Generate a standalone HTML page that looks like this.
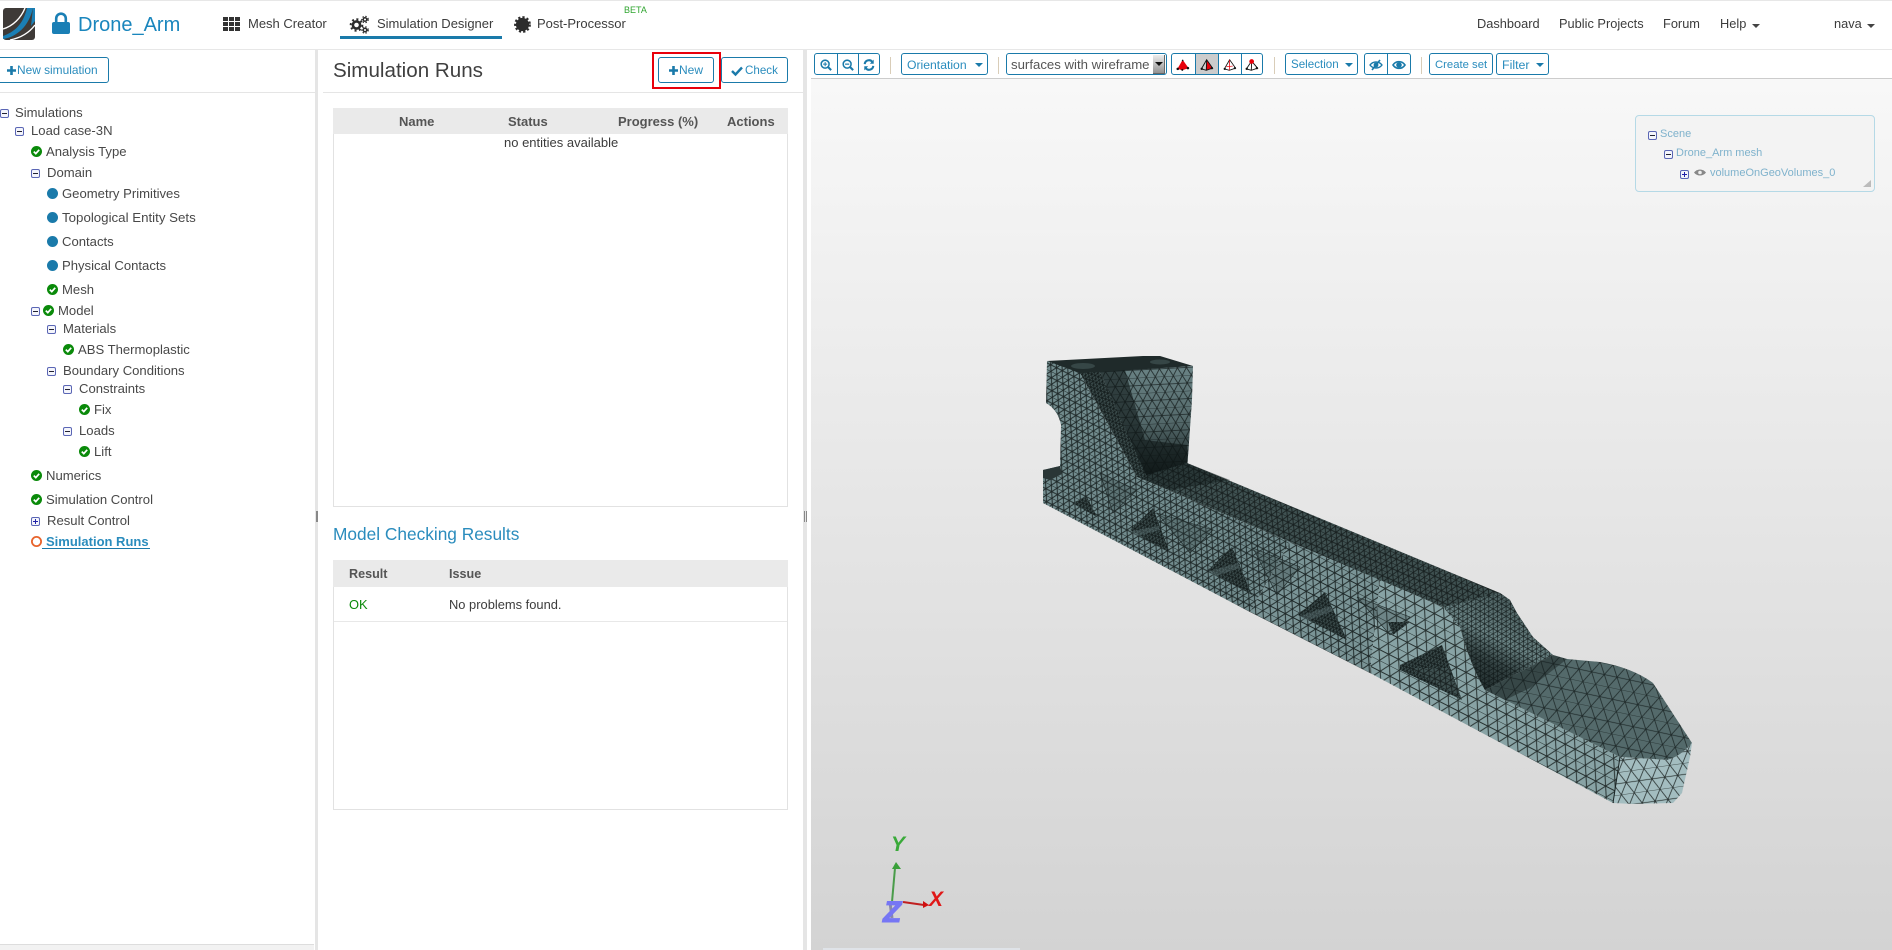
<!DOCTYPE html>
<html lang="en"><head><meta charset="utf-8"><title>Drone_Arm</title>
<style>
html,body{margin:0;padding:0;background:#fff}
body{width:1892px;height:950px;overflow:hidden;position:relative;font-family:"Liberation Sans",sans-serif;color:#444}
.a{position:absolute;white-space:nowrap}
.t{position:absolute;white-space:nowrap;font-size:13.1px;line-height:16px;color:#484848}
.i{position:absolute;overflow:visible}
.n{position:absolute;white-space:nowrap;font-size:12.8px;line-height:16px;color:#3c3c3c;top:16px}
.b{position:absolute;box-sizing:border-box;border:1px solid #1a7aaa;border-radius:3px;background:#fff;color:#2a8cbd;font-size:12px;line-height:22px;white-space:nowrap;text-align:left}
.th{position:absolute;font-weight:bold;font-size:13px;line-height:16px;color:#555;white-space:nowrap}
.sep{position:absolute;top:57px;width:1px;height:17px;background:#d9cdb8}
.dv{position:absolute;top:53px;width:1px;height:22px;background:#1a7aaa}
.tr{position:absolute;white-space:nowrap;font-size:11px;line-height:14px;color:#7fb2cc}
</style></head><body>
<svg width="0" height="0" style="position:absolute"><defs>
<symbol id="chk" viewBox="0 0 11 11"><circle cx="5.5" cy="5.5" r="5.5" fill="#0a8a0a"/><path d="M2.8 5.6L4.8 7.6L8.2 3.8" fill="none" stroke="#fff" stroke-width="1.7"/></symbol>
<symbol id="min" viewBox="0 0 9 9"><rect x=".5" y=".5" width="8" height="8" rx="1.5" fill="#f4f5fb" stroke="#5a66b5"/><path d="M2 4.5H7" stroke="#223" stroke-width="1"/></symbol>
<symbol id="pls" viewBox="0 0 9 9"><rect x=".5" y=".5" width="8" height="8" rx="1.5" fill="#f4f5fb" stroke="#5a66b5"/><path d="M2 4.5H7M4.5 2V7" stroke="#22a" stroke-width="1"/></symbol>
<pattern id="mS1" width="6.5" height="11.26" patternUnits="userSpaceOnUse" patternTransform="rotate(27)"><rect width="6.5" height="11.26" fill="#728c8e"/><path d="M0 0H6.5M0 5.63H6.5M0 0L3.25 5.63L0 11.26M6.5 0L3.25 5.63L6.5 11.26" stroke="#1e2828" stroke-width=".95" fill="none"/></pattern>
<pattern id="mSm" width="8.5" height="14.7" patternUnits="userSpaceOnUse" patternTransform="rotate(27)"><rect width="8.5" height="14.7" fill="#7a9496"/><path d="M0 0H8.5M0 7.35H8.5M0 0L4.25 7.35L0 14.7M8.5 0L4.25 7.35L8.5 14.7" stroke="#1e2828" stroke-width=".95" fill="none"/></pattern>
<pattern id="mS2" width="11" height="19" patternUnits="userSpaceOnUse" patternTransform="rotate(27)"><rect width="11" height="19" fill="#88a3a5"/><path d="M0 0H11M0 9.5H11M0 0L5.5 9.5L0 19M11 0L5.5 9.5L11 19" stroke="#26302f" stroke-width=".95" fill="none"/></pattern>
<pattern id="mE" width="13" height="22.5" patternUnits="userSpaceOnUse" patternTransform="rotate(-8)"><rect width="13" height="22.5" fill="#a3bdc0"/><path d="M0 0H13M0 11.25H13M0 0L6.5 11.25L0 22.5M13 0L6.5 11.25L13 22.5" stroke="#27302f" stroke-width=".8" fill="none"/></pattern>
<pattern id="mT" width="6" height="10.4" patternUnits="userSpaceOnUse" patternTransform="rotate(24)"><rect width="6" height="10.4" fill="#3f5151"/><path d="M0 0H6M0 5.2H6M0 0L3 5.2L0 10.4M6 0L3 5.2L6 10.4" stroke="#182020" stroke-width=".9" fill="none"/></pattern>
<pattern id="mP" width="13" height="22.5" patternUnits="userSpaceOnUse" patternTransform="rotate(12)"><rect width="13" height="22.5" fill="#546a6b"/><path d="M0 0H13M0 11.25H13M0 0L6.5 11.25L0 22.5M13 0L6.5 11.25L13 22.5" stroke="#1f2a2a" stroke-width=".8" fill="none"/></pattern>
<pattern id="mD" width="3.6" height="6.2" patternUnits="userSpaceOnUse" patternTransform="rotate(20)"><rect width="3.6" height="6.2" fill="#3c4d4d"/><path d="M0 0H3.6M0 3.1H3.6M0 0L1.8 3.1L0 6.2M3.6 0L1.8 3.1L3.6 6.2" stroke="#121a1a" stroke-width=".7" fill="none"/></pattern>
<pattern id="mF" width="5" height="8.6" patternUnits="userSpaceOnUse" patternTransform="rotate(30)"><rect width="5" height="8.6" fill="#708a8b"/><path d="M0 0H5M0 4.3H5M0 0L2.5 4.3L0 8.6M5 0L2.5 4.3L5 8.6" stroke="#1a2323" stroke-width=".7" fill="none"/></pattern>
<pattern id="mB" width="9" height="15.6" patternUnits="userSpaceOnUse" patternTransform="rotate(-3)"><rect width="9" height="15.6" fill="#6a8385"/><path d="M0 0H9M0 7.8H9M0 0L4.5 7.8L0 15.6M9 0L4.5 7.8L9 15.6" stroke="#1f2929" stroke-width=".8" fill="none"/></pattern>
<linearGradient id="cg" x1="0" y1="0" x2="0" y2="1"><stop offset="0" stop-color="#111a1a" stop-opacity="0"/><stop offset=".5" stop-color="#111a1a" stop-opacity=".25"/><stop offset="1" stop-color="#0a1010" stop-opacity=".95"/></linearGradient>
<linearGradient id="fg" gradientUnits="userSpaceOnUse" x1="1510" y1="600" x2="1470" y2="680"><stop offset="0" stop-color="#0c1414" stop-opacity=".35"/><stop offset=".45" stop-color="#0c1414" stop-opacity=".05"/><stop offset=".72" stop-color="#0c1414" stop-opacity=".6"/><stop offset="1" stop-color="#0c1414" stop-opacity=".75"/></linearGradient>
</defs></svg>

<!-- top nav -->
<div class="a" style="left:0;top:0;width:1892px;height:1px;background:#e7e7e7"></div>
<div class="a" style="left:0;top:49px;width:1892px;height:1px;background:#e7e7e7"></div>
<svg class="i" style="left:3px;top:8px" width="32" height="32" viewBox="0 0 32 32"><rect width="32" height="32" rx="3" fill="#3e3a37"/><path d="M0 28C11 24 20 17 24 0H30C26 18 14 29 0 31Z" fill="#1a7fb5"/><path d="M0 21C10 18 18 10 22 0" fill="none" stroke="#fff" stroke-width="1.4"/><path d="M7 32C17 30 26 25 32 17" fill="none" stroke="#fff" stroke-width="1.4"/><path d="M30 0H32V13L28 18Z" fill="#1a7fb5"/></svg>
<svg class="i" style="left:52px;top:12px" width="18" height="22" viewBox="0 0 18 22"><path d="M4.2 11V6.5a4.8 4.8 0 0 1 9.6 0V11" fill="none" stroke="#1a7fb5" stroke-width="2.6"/><rect y="10" width="18" height="12" rx="2" fill="#1a7fb5"/></svg>
<div class="a" style="left:78px;top:13px;font-size:20px;line-height:24px;color:#1a86bd">Drone_Arm</div>
<svg class="i" style="left:223px;top:17px" width="17" height="14" fill="#333"><rect width="5" height="4"/><rect x="6" width="5" height="4"/><rect x="12" width="5" height="4"/><rect y="5" width="5" height="4"/><rect x="6" y="5" width="5" height="4"/><rect x="12" y="5" width="5" height="4"/><rect y="10" width="5" height="4"/><rect x="6" y="10" width="5" height="4"/><rect x="12" y="10" width="5" height="4"/></svg>
<div class="n" style="left:248px;font-size:13px">Mesh Creator</div>
<svg class="i" style="left:350px;top:15px" width="19" height="19" fill="none" stroke="#2c2c2c"><circle cx="6.5" cy="10" r="3.6" stroke-width="2.6"/><circle cx="6.5" cy="10" r="5.8" stroke-width="2" stroke-dasharray="2 2.5"/><circle cx="15" cy="4.5" r="1.8" stroke-width="1.5"/><circle cx="15" cy="4.5" r="3.2" stroke-width="1.2" stroke-dasharray="1.4 1.6"/><circle cx="15" cy="15" r="1.8" stroke-width="1.5"/><circle cx="15" cy="15" r="3.2" stroke-width="1.2" stroke-dasharray="1.4 1.6"/></svg>
<div class="n" style="left:377px;font-size:13px">Simulation Designer</div>
<div class="a" style="left:340px;top:36px;width:162px;height:3px;background:#1a7aaa"></div>
<svg class="i" style="left:514px;top:16px" width="17" height="17"><circle cx="8.5" cy="8.5" r="6.6" fill="#2c2c2c"/><circle cx="8.5" cy="8.5" r="7.2" fill="none" stroke="#2c2c2c" stroke-width="2.4" stroke-dasharray="2.2 2"/></svg>
<div class="n" style="left:537px;font-size:13px">Post-Processor</div>
<div class="a" style="left:624px;top:5px;font-size:9px;line-height:11px;color:#2fa52f">BETA</div>
<div class="n" style="left:1477px">Dashboard</div>
<div class="n" style="left:1559px">Public Projects</div>
<div class="n" style="left:1663px">Forum</div>
<div class="n" style="left:1720px">Help</div>
<svg class="i" style="left:1752px;top:24px" width="8" height="4"><path d="M0 0H8L4 4Z" fill="#444"/></svg>
<div class="n" style="left:1834px">nava</div>
<svg class="i" style="left:1867px;top:24px" width="8" height="4"><path d="M0 0H8L4 4Z" fill="#444"/></svg>

<!-- left panel -->
<div class="b" style="left:-4px;top:57px;width:113px;height:26px;line-height:24px;font-size:11.9px"><svg class="i" style="left:10px;top:8px" width="9" height="9"><path d="M4.5 0V9M0 4.5H9" stroke="#1a7aaa" stroke-width="2.6"/></svg><span style="position:absolute;left:20px">New simulation</span></div>
<div class="a" style="left:0;top:92px;width:315px;height:1px;background:#e5e5e5"></div>
<div class="a" style="left:0;top:944px;width:314px;height:6px;background:#f2f2f2;border-top:1px solid #ddd;box-sizing:border-box"></div>
<div class="a" style="left:315px;top:50px;width:3px;height:900px;background:#e5e5e5"></div>
<div class="a" style="left:316px;top:511px;width:2px;height:11px;border-left:1px solid #888;border-right:1px solid #888;box-sizing:border-box"></div>

<svg class="i" style="left:0;top:109px" width="9" height="9"><use href="#min"/></svg><div class="t" style="left:15px;top:105px">Simulations</div>
<svg class="i" style="left:15px;top:127px" width="9" height="9"><use href="#min"/></svg><div class="t" style="left:31px;top:123px">Load case-3N</div>
<svg class="i" style="left:31px;top:146px" width="11" height="11"><use href="#chk"/></svg><div class="t" style="left:46px;top:144px">Analysis Type</div>
<svg class="i" style="left:31px;top:169px" width="9" height="9"><use href="#min"/></svg><div class="t" style="left:47px;top:165px">Domain</div>
<svg class="i" style="left:47px;top:188px" width="11" height="11"><circle cx="5.5" cy="5.5" r="5.5" fill="#1a7aaa"/></svg><div class="t" style="left:62px;top:186px">Geometry Primitives</div>
<svg class="i" style="left:47px;top:212px" width="11" height="11"><circle cx="5.5" cy="5.5" r="5.5" fill="#1a7aaa"/></svg><div class="t" style="left:62px;top:210px;font-size:13.3px">Topological Entity Sets</div>
<svg class="i" style="left:47px;top:236px" width="11" height="11"><circle cx="5.5" cy="5.5" r="5.5" fill="#1a7aaa"/></svg><div class="t" style="left:62px;top:234px">Contacts</div>
<svg class="i" style="left:47px;top:260px" width="11" height="11"><circle cx="5.5" cy="5.5" r="5.5" fill="#1a7aaa"/></svg><div class="t" style="left:62px;top:258px">Physical Contacts</div>
<svg class="i" style="left:47px;top:284px" width="11" height="11"><use href="#chk"/></svg><div class="t" style="left:62px;top:282px">Mesh</div>
<svg class="i" style="left:31px;top:307px" width="9" height="9"><use href="#min"/></svg><svg class="i" style="left:43px;top:305px" width="11" height="11"><use href="#chk"/></svg><div class="t" style="left:58px;top:303px">Model</div>
<svg class="i" style="left:47px;top:325px" width="9" height="9"><use href="#min"/></svg><div class="t" style="left:63px;top:321px">Materials</div>
<svg class="i" style="left:63px;top:344px" width="11" height="11"><use href="#chk"/></svg><div class="t" style="left:78px;top:342px">ABS Thermoplastic</div>
<svg class="i" style="left:47px;top:367px" width="9" height="9"><use href="#min"/></svg><div class="t" style="left:63px;top:363px">Boundary Conditions</div>
<svg class="i" style="left:63px;top:385px" width="9" height="9"><use href="#min"/></svg><div class="t" style="left:79px;top:381px">Constraints</div>
<svg class="i" style="left:79px;top:404px" width="11" height="11"><use href="#chk"/></svg><div class="t" style="left:94px;top:402px">Fix</div>
<svg class="i" style="left:63px;top:427px" width="9" height="9"><use href="#min"/></svg><div class="t" style="left:79px;top:423px">Loads</div>
<svg class="i" style="left:79px;top:446px" width="11" height="11"><use href="#chk"/></svg><div class="t" style="left:94px;top:444px">Lift</div>
<svg class="i" style="left:31px;top:470px" width="11" height="11"><use href="#chk"/></svg><div class="t" style="left:46px;top:468px">Numerics</div>
<svg class="i" style="left:31px;top:494px" width="11" height="11"><use href="#chk"/></svg><div class="t" style="left:46px;top:492px">Simulation Control</div>
<svg class="i" style="left:31px;top:517px" width="9" height="9"><use href="#pls"/></svg><div class="t" style="left:47px;top:513px">Result Control</div>
<svg class="i" style="left:31px;top:536px" width="11" height="11"><circle cx="5.5" cy="5.5" r="4.6" fill="none" stroke="#e8642c" stroke-width="1.8"/></svg>
<div class="t" style="left:46px;top:534px;font-weight:bold;font-size:13px;color:#2a8cbd">Simulation Runs</div>
<div class="a" style="left:42px;top:548px;width:108px;height:1px;background:#1a7aaa"></div>

<!-- middle panel -->
<div class="a" style="left:323px;top:92px;width:480px;height:1px;background:#e5e5e5"></div>
<div class="a" style="left:333px;top:58px;font-size:20.6px;line-height:26px;color:#3f3f3f">Simulation Runs</div>
<div class="b" style="left:658px;top:57px;width:56px;height:26px;line-height:25px;font-size:12px"><svg class="i" style="left:10px;top:8px" width="9" height="9"><path d="M4.5 0V9M0 4.5H9" stroke="#1a7aaa" stroke-width="2.6"/></svg><span style="position:absolute;left:20px">New</span></div>
<div class="b" style="left:721px;top:57px;width:67px;height:26px;line-height:25px;font-size:11.6px"><svg class="i" style="left:9px;top:8px" width="12" height="10"><path d="M1 5L4.5 8.5L11 1.5" fill="none" stroke="#1a7aaa" stroke-width="2.4"/></svg><span style="position:absolute;left:23px">Check</span></div>
<div class="a" style="left:652px;top:52px;width:69px;height:37px;box-sizing:border-box;border:2px solid #e8000b"></div>

<div class="a" style="left:333px;top:108px;width:455px;height:399px;box-sizing:border-box;border:1px solid #e2e2e2"></div>
<div class="a" style="left:333px;top:108px;width:455px;height:26px;background:#eaeaea"></div>
<div class="th" style="left:399px;top:114px">Name</div>
<div class="th" style="left:508px;top:114px">Status</div>
<div class="th" style="left:618px;top:114px">Progress (%)</div>
<div class="th" style="left:727px;top:114px">Actions</div>
<div class="a" style="left:504px;top:135px;font-size:13px;line-height:16px;color:#3c3c3c">no entities available</div>

<div class="a" style="left:333px;top:523px;font-size:17.3px;line-height:22px;color:#2a8cbd">Model Checking Results</div>
<div class="a" style="left:333px;top:560px;width:455px;height:250px;box-sizing:border-box;border:1px solid #e2e2e2"></div>
<div class="a" style="left:333px;top:560px;width:455px;height:27px;background:#eaeaea"></div>
<div class="th" style="left:349px;top:566px;font-size:12.6px">Result</div>
<div class="th" style="left:449px;top:566px;font-size:12.6px">Issue</div>
<div class="a" style="left:349px;top:597px;font-size:12.9px;line-height:16px;color:#0a8a0a">OK</div>
<div class="a" style="left:449px;top:597px;font-size:12.9px;line-height:16px;color:#3c3c3c">No problems found.</div>
<div class="a" style="left:334px;top:621px;width:453px;height:1px;background:#e8e8e8"></div>
<div class="a" style="left:803px;top:50px;width:4px;height:900px;background:#e5e5e5"></div>
<div class="a" style="left:804px;top:511px;width:3px;height:11px;border-left:1px solid #888;border-right:1px solid #888;box-sizing:border-box"></div>

<!-- toolbar -->
<div class="b" style="left:814px;top:53px;width:66px;height:22px"></div>
<div class="dv" style="left:837px"></div><div class="dv" style="left:858px"></div>
<svg class="i" style="left:820px;top:59px" width="12" height="12" viewBox="0 0 14 14" fill="none" stroke="#1a7aaa"><circle cx="6" cy="6" r="4.6" stroke-width="1.8"/><path d="M9.5 9.5L13 13" stroke-width="2.4"/><path d="M3.6 6H8.4M6 3.6V8.4" stroke-width="1.2"/></svg>
<svg class="i" style="left:842px;top:59px" width="12" height="12" viewBox="0 0 14 14" fill="none" stroke="#1a7aaa"><circle cx="6" cy="6" r="4.6" stroke-width="1.8"/><path d="M9.5 9.5L13 13" stroke-width="2.4"/><path d="M3.6 6H8.4" stroke-width="1.4"/></svg>
<svg class="i" style="left:863px;top:59px" width="12" height="12" viewBox="0 0 14 14" fill="none" stroke="#1a7aaa" stroke-width="2.4"><path d="M2 6A5 5 0 0 1 11 3.5"/><path d="M12 8A5 5 0 0 1 3 10.5"/><path d="M12.5 0.8V5.5H8" fill="#1a7aaa" stroke="none"/><path d="M1.5 13.2V8.5H6" fill="#1a7aaa" stroke="none"/></svg>
<div class="sep" style="left:890px"></div>
<div class="b" style="left:901px;top:53px;width:87px;height:22px"><span style="position:absolute;left:5px;font-size:12.2px">Orientation</span><svg class="i" style="left:73px;top:9px" width="8" height="4"><path d="M0 0H8L4 4Z" fill="#1a7aaa"/></svg></div>
<div class="sep" style="left:998px"></div>
<div class="b" style="left:1006px;top:53px;width:161px;height:22px;color:#555;font-size:13.2px;line-height:21px;padding-left:4px">surfaces with wireframe</div>
<div class="a" style="left:1153px;top:55px;width:12px;height:19px;background:linear-gradient(#ededed,#8e8e8e);box-shadow:inset -1px -1px 0 #666"></div>
<svg class="i" style="left:1155px;top:62px" width="8" height="4"><path d="M0 0H8L4 4Z" fill="#111"/></svg>
<div class="b" style="left:1171px;top:53px;width:92px;height:22px"></div>
<div class="a" style="left:1195px;top:54px;width:23px;height:20px;background:#ccc"></div>
<div class="dv" style="left:1195px"></div><div class="dv" style="left:1218px"></div><div class="dv" style="left:1241px"></div>
<svg class="i" style="left:1176px;top:59px" width="14" height="12" viewBox="0 0 20 17"><path d="M9.5 1L2 14L9 16L18 13Z" fill="#e8000b"/><g fill="#111"><circle cx="9.5" cy="2" r="1.2"/><circle cx="2.5" cy="14" r="1.8"/><circle cx="17" cy="13" r="1.8"/><circle cx="9" cy="15.5" r="1.4"/></g></svg>
<svg class="i" style="left:1200px;top:59px" width="14" height="12" viewBox="0 0 20 17"><path d="M9.5 1L9 16L17 13Z" fill="#e8000b"/><path d="M9.5 1L2 14L9 16L18 13ZM9.5 1L9 16" fill="none" stroke="#111" stroke-width="1.3"/><g fill="#111"><circle cx="2.5" cy="14" r="1.7"/><circle cx="17" cy="13" r="1.7"/></g></svg>
<svg class="i" style="left:1223px;top:59px" width="14" height="12" viewBox="0 0 20 17"><path d="M9.5 1L2 14L9 16L18 13Z" fill="#fff" stroke="#111" stroke-width="1.2"/><path d="M9.5 1L9 16" stroke="#e8000b" stroke-width="1.1"/><path d="M5 11L14 10" stroke="#e8000b" stroke-width=".9"/><g fill="#111"><circle cx="2.5" cy="14" r="1.6"/><circle cx="17" cy="13" r="1.6"/></g></svg>
<svg class="i" style="left:1245px;top:59px" width="14" height="12" viewBox="0 0 20 17"><path d="M9.5 3L2 14L9 16L18 13ZM9.5 3L9 16" fill="none" stroke="#111" stroke-width="1.3"/><circle cx="9.5" cy="3.5" r="3.4" fill="#e8000b"/><g fill="#111"><circle cx="2.5" cy="14" r="1.7"/><circle cx="17" cy="13" r="1.7"/></g></svg>
<div class="sep" style="left:1274px"></div>
<div class="b" style="left:1285px;top:53px;width:73px;height:22px"><span style="position:absolute;left:5px;font-size:11.6px">Selection</span><svg class="i" style="left:59px;top:9px" width="8" height="4"><path d="M0 0H8L4 4Z" fill="#1a7aaa"/></svg></div>
<div class="b" style="left:1364px;top:53px;width:47px;height:22px"></div>
<div class="dv" style="left:1387px"></div>
<svg class="i" style="left:1369px;top:59px" width="14" height="12"><path d="M1 6C4 2 10 2 13 6C10 10 4 10 1 6Z" fill="none" stroke="#1a7aaa" stroke-width="1.4"/><circle cx="7" cy="6" r="2.4" fill="#1a7aaa"/><path d="M3 11L11 1" stroke="#1a7aaa" stroke-width="1.6"/></svg>
<svg class="i" style="left:1392px;top:59px" width="14" height="12"><path d="M1 6C4 1.5 10 1.5 13 6C10 10.5 4 10.5 1 6Z" fill="none" stroke="#1a7aaa" stroke-width="1.6"/><circle cx="7" cy="6" r="2.8" fill="#1a7aaa"/></svg>
<div class="sep" style="left:1421px"></div>
<div class="b" style="left:1429px;top:53px;width:64px;height:22px"><span style="position:absolute;left:5px;font-size:11.3px">Create set</span></div>
<div class="b" style="left:1496px;top:53px;width:53px;height:22px"><span style="position:absolute;left:5px;font-size:12.4px">Filter</span><svg class="i" style="left:39px;top:9px" width="8" height="4"><path d="M0 0H8L4 4Z" fill="#1a7aaa"/></svg></div>

<!-- canvas -->
<div class="a" style="left:811px;top:78px;width:1081px;height:1px;background:#ccc"></div>
<div class="a" style="left:811px;top:79px;width:1081px;height:871px;background:linear-gradient(#f8f8f8,#d3d3d3)"></div>
<div class="a" style="left:823px;top:948px;width:197px;height:2px;background:#dfe3e8"></div>

<div class="a" style="left:1635px;top:115px;width:240px;height:77px;box-sizing:border-box;border:1px solid #b5d9e6;border-radius:4px;background:#f3f3f3"></div>
<svg class="i" style="left:1648px;top:131px" width="9" height="9"><use href="#min"/></svg><div class="tr" style="left:1660px;top:127px">Scene</div>
<svg class="i" style="left:1664px;top:150px" width="9" height="9"><use href="#min"/></svg><div class="tr" style="left:1676px;top:146px">Drone_Arm mesh</div>
<svg class="i" style="left:1680px;top:170px" width="9" height="9"><use href="#pls"/></svg>
<svg class="i" style="left:1694px;top:168px" width="12" height="9"><path d="M0 4.5C3 .5 9 .5 12 4.5C9 8.5 3 8.5 0 4.5Z" fill="#888"/><circle cx="6" cy="4.5" r="1.8" fill="#eee"/></svg>
<div class="tr" style="left:1710px;top:166px">volumeOnGeoVolumes_0</div>
<svg class="i" style="left:1863px;top:180px" width="8" height="7"><path d="M8 0V7H0Z" fill="#bbb"/></svg>

<!-- 3D mesh -->
<svg class="i" style="left:0;top:0" width="1892" height="950" viewBox="0 0 1892 950">
<!-- block top -->
<path d="M1047 361L1143 356L1160 356L1193 366L1100 373L1080 374Z" fill="#1f2a2a"/>
<ellipse cx="1083" cy="366" rx="12" ry="3" fill="#364646"/><ellipse cx="1160" cy="362" rx="10" ry="2.5" fill="#364646"/>
<!-- back face of block -->
<path d="M1100 372L1193 366L1192 400L1187 470L1147 478Z" fill="url(#mB)"/>
<path d="M1100 372L1193 366L1192 400L1187 470L1147 478Z" fill="url(#cg)"/>
<path d="M1100 372L1125 370L1145 440L1187 445L1187 463L1147 478Z" fill="#0f1717" opacity=".6"/>
<!-- beam top -->
<path d="M1137 477L1147 475L1187 463L1500 593L1510 600L1443 607Z" fill="url(#mT)"/>
<path d="M1137 477L1147 475L1187 463L1230 480L1170 490Z" fill="#101818" opacity=".45"/>
<!-- side wall -->
<path d="M1047 361L1080 373L1137 477L1290 542L1250 612L1043 503L1043 470L1060 466L1061 425Q1058 410 1046 403Z" fill="url(#mS1)"/>
<path d="M1290 542L1380 580L1370 673L1250 612Z" fill="url(#mSm)"/>
<path d="M1380 580L1443 607L1460 627Q1470 665 1485 690L1620 757L1613 803L1370 673Z" fill="url(#mS2)"/>
<!-- brace band -->
<path d="M1080 373L1100 372L1147 477L1137 477Z" fill="url(#mD)"/>
<!-- notch shadow -->
<path d="M1043 470L1060 466L1062 474L1050 480L1043 478Z" fill="#2a3636"/>
<!-- faint triangles -->
<g fill="#2a3838" fill-opacity=".28" stroke="#1d2727" stroke-width=".6">
<path d="M1137 490L1100 473L1113 513Z"/>
<path d="M1157 513L1213 530L1190 553Z"/>
<path d="M1253 548L1300 567L1277 595Z"/>
<path d="M1357 597L1410 617L1390 635Z"/>
</g>
<!-- dark holes -->
<g fill="url(#mD)">
<path d="M1072 503L1087 497L1097 517Z"/>
<path d="M1130 530L1153 508L1170 553Z"/>
<path d="M1208 570L1232 547L1252 595Z"/>
<path d="M1298 615L1325 592L1347 640Z"/>
<path d="M1388 622L1410 622L1393 635Z"/>
<path d="M1400 665L1442 645L1462 700L1400 670Z"/>
</g>
<g fill="#6a8284" opacity=".35">
<path d="M1132 531L1158 526L1160 530L1134 537Z"/>
<path d="M1210 571L1238 563L1240 568L1213 577Z"/>
<path d="M1300 616L1330 606L1333 611L1304 622Z"/>
</g>
<path d="M1410 668L1449 668L1461 698Z" fill="url(#mT)"/>
<!-- fillet -->
<path d="M1443 607L1500 593L1510 600L1517 613L1533 637L1553 655L1485 690Q1470 665 1460 627Z" fill="url(#mF)"/>
<path d="M1443 607L1500 593L1510 600L1517 613L1533 637L1553 655L1485 690Q1470 665 1460 627Z" fill="url(#fg)"/>
<!-- plate top -->
<path d="M1485 690L1553 655L1567 659L1600 662Q1633 668 1653 683L1692 743Q1680 757 1667 760L1620 757Z" fill="url(#mP)"/>
<path d="M1485 690L1553 655L1567 659L1530 688L1505 700Z" fill="#141c1c" opacity=".45"/>
<!-- end cap -->
<path d="M1620 757L1667 760Q1680 757 1692 743L1690 757L1682 793L1673 803L1633 804L1613 803Z" fill="url(#mE)"/>
<path d="M1620 757L1613 803" stroke="#1a2424" stroke-width="1"/>
<!-- triad -->
<path d="M892 902L895 868" stroke="#4a9c4a" stroke-width="2"/><path d="M896 862L901 869L892 869Z" fill="#3aa03a"/>
<path d="M903 902L924 905" stroke="#c02020" stroke-width="2"/><path d="M929 905L923 901L923 908Z" fill="#d01010"/>
<path d="M890 902L892 918" stroke="#8888aa" stroke-width="3"/>
<text x="891" y="851" font-family="Liberation Sans" font-weight="bold" font-style="italic" font-size="21" fill="#3aaa3a">Y</text>
<text x="929" y="906" font-family="Liberation Sans" font-weight="bold" font-style="italic" font-size="21" fill="#e01818">X</text>
<text x="883" y="922" font-family="Liberation Sans" font-weight="bold" font-style="italic" font-size="30" fill="#7676f4" stroke="#7676f4" stroke-width="1">Z</text>
</svg>
</body></html>
